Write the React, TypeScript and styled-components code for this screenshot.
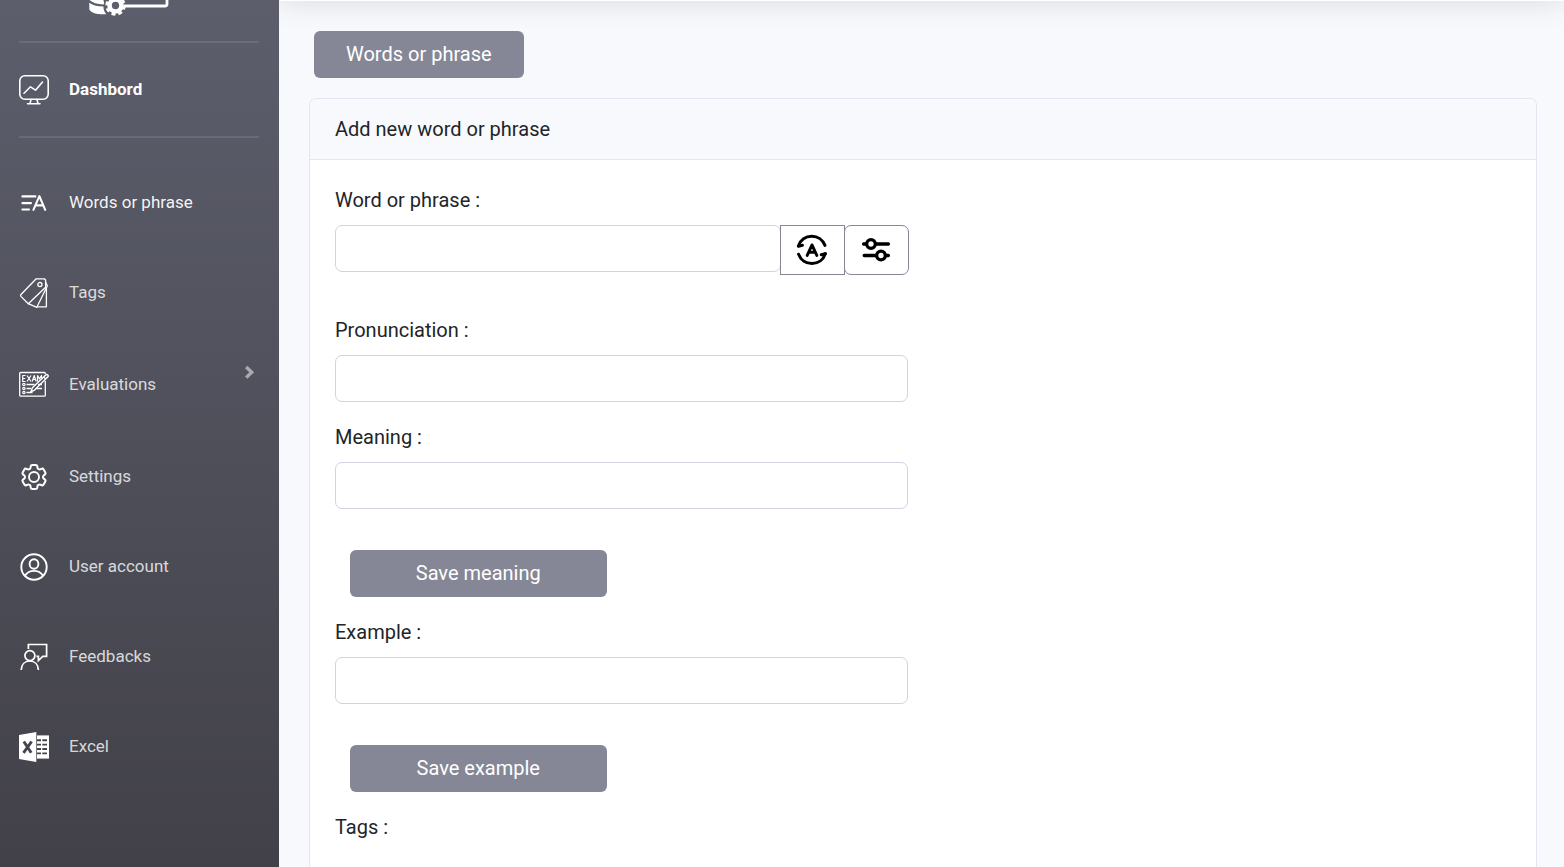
import React from "react";
import styled, { createGlobalStyle } from "styled-components";

const GlobalStyle = createGlobalStyle`
  *, *::before, *::after { box-sizing: border-box; }
  body {
    margin: 0;
    font-family: Roboto, "Liberation Sans", sans-serif;
    font-size: 20px;
    line-height: 30px;
    color: #212529;
    background: #f8f9fc;
  }
  button, input { font: inherit; }
`;

const Page = styled.div`
  display: flex;
  min-height: 100vh;
`;

const Sidebar = styled.nav`
  position: relative;
  z-index: 1;
  flex: 0 0 279px;
  display: flex;
  flex-direction: column;
  background: linear-gradient(180deg, #5c5e6b 0%, #5a5c69 8%, #424149 100%);
`;

const Brand = styled.a`
  display: flex;
  height: 41px;
  padding-left: 88px;
`;

const Divider = styled.hr`
  width: 240px;
  height: 2px;
  margin: 0 0 0 19px;
  border: 0;
  background: rgba(255, 255, 255, 0.1);
`;

const NavList = styled.ul`
  list-style: none;
  margin: 0;
  padding: 20px 0 0;
`;

const NavLink = styled.a<{ $active?: boolean; $strong?: boolean; $height?: number }>`
  display: flex;
  align-items: center;
  gap: 20px;
  height: ${(p) => p.$height ?? 90}px;
  padding: 0 24px 0 19px;
  color: ${(p) => (p.$strong ? "#fff" : p.$active ? "rgba(255,255,255,.95)" : "rgba(255,255,255,.8)")};
  font-size: 17px;
  font-weight: ${(p) => (p.$strong ? 700 : 400)};
  line-height: 28px;
  text-decoration: none;
`;

const NavText = styled.span`
  flex: 1;
  padding-bottom: 2px;
`;

const NavIcon = styled.svg`
  flex: 0 0 30px;
  width: 30px;
  height: 30px;
  fill: none;
  stroke: #fff;
`;

const Chevron = styled.svg`
  width: 11px;
  height: 14px;
  align-self: flex-start;
  margin-top: 27px;
`;

const Main = styled.main`
  flex: 1;
  min-width: 0;
  display: flex;
  flex-direction: column;
`;

const Topbar = styled.header`
  flex: 0 0 70px;
  margin-top: -69px;
  background: #fff;
  box-shadow: 0 2px 28px 0 rgba(58, 59, 69, 0.15);
`;

const Content = styled.div`
  flex: 1;
  display: flex;
  flex-direction: column;
  gap: 20px;
  padding: 30px 27px 0 30px;
`;

const Button = styled.button`
  height: 47px;
  padding: 0 32px 2px;
  border: 0;
  border-radius: 6px;
  color: #fff;
  background: #858796;
  line-height: 30px;
`;

const PageButton = styled(Button)`
  align-self: flex-start;
  margin-left: 5px;
`;

const SaveButton = styled(Button)`
  display: block;
  width: calc(50% - 30px);
  margin: 41px 0 20px 15px;
`;

const Card = styled.section`
  flex: 1;
  border: 1px solid #e3e6f0;
  border-bottom: 0;
  border-radius: 7px 7px 0 0;
  background: #fff;
`;

const CardTitle = styled.h1`
  margin: 0;
  padding: 15px 25px;
  border-bottom: 1px solid #e3e6f0;
  border-radius: 6px 6px 0 0;
  background: #f8f9fc;
  font-size: 20px;
  font-weight: 400;
`;

const Form = styled.form`
  width: 50%;
  padding: 25px 15px 0 25px;
`;

const Field = styled.div<{ $gap?: number }>`
  margin-bottom: ${(p) => p.$gap ?? 0}px;
`;

const Label = styled.label`
  display: block;
  margin-bottom: 10px;
`;

const GroupTitle = styled.div`
  margin-bottom: 10px;
`;

const TextInput = styled.input`
  display: block;
  width: 100%;
  height: 47px;
  padding: 0 15px;
  border: 1px solid #d1d3e2;
  border-radius: 7px;
  background: #fff;
  color: #6e707e;
`;

const InputGroup = styled.div`
  display: flex;
  align-items: flex-start;
  margin-right: -1px;

  ${TextInput} {
    flex: 1;
    min-width: 0;
  }
`;

const IconButton = styled.button<{ $last?: boolean }>`
  display: flex;
  align-items: center;
  justify-content: center;
  width: 65px;
  height: 50px;
  margin-left: -1px;
  padding: 0 1px 0 0;
  border: 1px solid #858796;
  border-radius: ${(p) => (p.$last ? "7px" : "0")};
  background: #fff;
`;

const MonitorIcon = () => (
  <NavIcon viewBox="0 0 30 30" strokeWidth="1.6" strokeLinecap="round" strokeLinejoin="round">
    <rect x="0.8" y="0.8" width="28.4" height="23.4" rx="5" />
    <path d="M5 18.2 11.5 11.8l5 3.4L23.5 7" />
    <path d="M12 24.5l-1 4M18 24.5l1 4M8.5 28.8h12.5" />
  </NavIcon>
);

const WordsIcon = () => (
  <NavIcon viewBox="0 0 30 30" strokeWidth="2.1" strokeLinecap="round" strokeLinejoin="round">
    <path d="M3.4 8.4h13M3.4 15.1h8.6M3.4 21.5h6.6" />
    <path d="M14.4 21.8 20.4 8.1l5.8 13.7M16.6 17.4h7.600" />
  </NavIcon>
);

const TagsIcon = () => (
  <NavIcon viewBox="0 0 30 30" strokeWidth="1.3" strokeLinejoin="round">
    <path d="M17.2 .8h8.2l1.2 1.2v7.2L9.3 25.7 1.9 18.4Q1.2 17.4 2 16.5z" />
    <path d="M26.600 4.400l1.800 3.400L17.800 29.300 9.300 25.700" />
    <path d="M27.400 9.500v19.300h-9.300" />
    <circle cx="20.900" cy="6.600" r="2.100" />
  </NavIcon>
);

const ExamIcon = () => (
  <NavIcon viewBox="0 0 30 30" strokeWidth="1.2" strokeLinejoin="round">
    <path d="M26.3 4V3.800Q26.300 2.500 25.400 2.500H1.600Q.7 2.500 .7 3.400v21.800q0 .9.900.9h23.800q.9 0 .9-.9V11" strokeWidth="1.300" />
    <path d="M6.500 5.500H3.700v6h2.800M3.700 8.500h2.500M8 5.500l4 6M12 5.500l-4 6M13.200 11.500l2-6 2 6M14 9.500h2.700M18.500 11.500v-6l2 3.400 2-3.400v3" />
    <path d="M11.900 21.800l1.500-4L26.700 5q1-1 2 0t.2 1.800L15.600 20.100zM24.700 7l2.100 2" strokeWidth="1.400" />
    <circle cx="4.900" cy="14.500" r="1.200" />
    <circle cx="4.900" cy="18.500" r="1.200" />
    <circle cx="4.900" cy="22.500" r="1.200" />
    <path d="M7.500 14.500h8M7.500 18.500h4.600M7.500 22.500h6M17 18.500h6M19 14.500h4" strokeWidth="1.300" />
  </NavIcon>
);

const GearIcon = () => (
  <NavIcon viewBox="0 0 24 24" strokeWidth="1.500" strokeLinecap="round" strokeLinejoin="round">
    <path d="M9.594 3.940c.09-.542.56-.94 1.110-.94h2.593c.55 0 1.020.398 1.110.94l.213 1.281c.063.374.313.686.645.87.074.04.147.083.22.127.325.196.72.257 1.075.124l1.217-.456a1.125 1.125 0 0 1 1.370.49l1.296 2.247a1.125 1.125 0 0 1-.26 1.431l-1.003.827c-.293.241-.438.613-.43.992a7.723 7.723 0 0 1 0 .255c-.008.378.137.75.43.991l1.004.827c.424.35.534.955.26 1.430l-1.298 2.247a1.125 1.125 0 0 1-1.369.491l-1.217-.456c-.355-.133-.75-.072-1.076.124a6.470 6.470 0 0 1-.22.128c-.331.183-.581.495-.644.869l-.213 1.281c-.09.543-.56.94-1.110.94h-2.594c-.55 0-1.019-.398-1.110-.94l-.213-1.281c-.062-.374-.312-.686-.644-.87a6.520 6.520 0 0 1-.22-.127c-.325-.196-.72-.257-1.076-.124l-1.217.456a1.125 1.125 0 0 1-1.369-.49l-1.297-2.247a1.125 1.125 0 0 1 .26-1.431l1.004-.827c.292-.24.437-.613.43-.991a6.932 6.932 0 0 1 0-.255c.007-.38-.138-.751-.43-.992l-1.004-.827a1.125 1.125 0 0 1-.26-1.430l1.297-2.247a1.125 1.125 0 0 1 1.370-.491l1.216.456c.356.133.751.072 1.076-.124.072-.044.146-.086.22-.128.332-.183.582-.495.644-.869z" transform="translate(-0.900 -0.900) scale(1.075)" />
    <circle cx="12" cy="12" r="4" />
  </NavIcon>
);

const UserIcon = () => (
  <NavIcon viewBox="0 0 30 30" strokeWidth="1.900">
    <circle cx="15" cy="15" r="12.700" />
    <ellipse cx="15" cy="12" rx="4.400" ry="4.800" />
    <path d="M5.900 23.800c2.200-3.300 5.300-4.900 9.100-4.900s6.900 1.600 9.100 4.900" />
  </NavIcon>
);

const FeedbackIcon = () => (
  <NavIcon viewBox="0 0 30 30" strokeWidth="1.700">
    <path d="M9.400 7V2.500h18.200v11.800h-3.800l-4.400 4.200v-4.200h-2" />
    <circle cx="10.900" cy="13.600" r="5" />
    <path d="M2.200 28c.2-5.400 3.500-9 8.600-9s8.400 3.600 8.600 9" />
  </NavIcon>
);

const ExcelIcon = () => (
  <NavIcon viewBox="0 0 30 30">
    <path d="M17.300 0v30L0 27V3z" fill="#fff" stroke="none" />
    <path d="M18 3.400h12v23.200H18z" fill="#fff" stroke="none" />
    <path d="M18 8.200h4M23.300 8.200h4.700M18 12.600h4M23.300 12.600h4.700M18 17h4M23.300 17h4.700M18 21.400h4M23.300 21.400h4.700" stroke="#45454e" strokeWidth="1.900" />
    <path d="M4.800 9.500 12.200 20.800M12.600 9.500 4.500 20.800" stroke="#45454e" strokeWidth="2.900" />
  </NavIcon>
);

const BrandMark = () => (
  <svg width="82" height="17" viewBox="0 0 82 17" fill="none" aria-hidden="true">
    <path d="M1.400 0h14l.8 3.200-.7 1.200C9 4.200 4.700 2.800 1.400 0zM1.200 2.800c4 2.800 8.600 3.800 14.200 3.800 0 2.600.8 5.400 2.800 7.600C10 14.600 3.600 13.400 1.400 9.800z" fill="#fff" />
    <circle cx="27.500" cy="5.500" r="6" stroke="#fff" strokeWidth="4.600" />
    <circle cx="27.500" cy="5.500" r="9" stroke="#fff" strokeWidth="2.400" strokeDasharray="4 3.070" />
    <path d="M36 6h41q2 0 2-2V0" stroke="#fff" strokeWidth="2.800" />
  </svg>
);

const TranslateIcon = () => (
  <svg width="32" height="32" viewBox="0 0 32 32" fill="none" stroke="#000" strokeWidth="3" strokeLinecap="round" strokeLinejoin="round" aria-hidden="true">
    <path d="M2.500 11.800C4.500 6 9.600 2.200 15.700 2.200c6 0 11.200 3.600 13.300 9.200" />
    <path d="M29.300 19.800C27.400 25.700 22.200 29.600 16 29.600S4.600 25.800 2.600 20.200" />
    <path d="M2.400 12.200l4-.9M29.300 19.600l-4 1.200" />
    <path d="M11.200 21.400 16 10.900l4.800 10.500M13.200 18.200h5.600" strokeWidth="2.900" />
  </svg>
);

const SlidersIcon = () => (
  <svg width="30" height="26" viewBox="0 0 30 26" fill="none" stroke="#000" strokeWidth="3.300" strokeLinecap="round" aria-hidden="true">
    <path d="M2.600 7h2.500M14.600 7h12.800M3.200 18.500h12M24.800 18.500h2.600" />
    <circle cx="10" cy="7" r="4.300" />
    <circle cx="20" cy="18.500" r="4.300" />
  </svg>
);

type Item = { label: string; icon: React.FC; active?: boolean; nested?: boolean };

const items: Item[] = [
  { label: "Words or phrase", icon: WordsIcon, active: true },
  { label: "Tags", icon: TagsIcon },
  { label: "Evaluations", icon: ExamIcon, nested: true },
  { label: "Settings", icon: GearIcon },
  { label: "User account", icon: UserIcon },
  { label: "Feedbacks", icon: FeedbackIcon },
  { label: "Excel", icon: ExcelIcon },
];

export default function App() {
  return (
    <>
      <GlobalStyle />
      <Page>
        <Sidebar>
          <Brand href="#" aria-label="Home">
            <BrandMark />
          </Brand>
          <Divider />
          <NavLink href="#" $strong $height={93}>
            <MonitorIcon />
            <NavText>Dashbord</NavText>
          </NavLink>
          <Divider />
          <NavList>
            {items.map(({ label, icon: Icon, active, nested }) => (
              <li key={label}>
                <NavLink href="#" $active={active} $height={nested ? 94 : 90}>
                  <Icon />
                  <NavText>{label}</NavText>
                  {nested && (
                    <Chevron viewBox="0 0 11 14" fill="none" stroke="#a9a9af" strokeWidth="3.400" aria-hidden="true">
                      <path d="M2.200 2 7.700 7.300 2.200 12.600" />
                    </Chevron>
                  )}
                </NavLink>
              </li>
            ))}
          </NavList>
        </Sidebar>
        <Main>
          <Topbar />
          <Content>
            <PageButton type="button">Words or phrase</PageButton>
            <Card>
              <CardTitle>Add new word or phrase</CardTitle>
              <Form>
                <Field $gap={40}>
                  <Label htmlFor="word">Word or phrase :</Label>
                  <InputGroup>
                    <TextInput id="word" type="text" />
                    <IconButton type="button" aria-label="Translate">
                      <TranslateIcon />
                    </IconButton>
                    <IconButton type="button" aria-label="Options" $last>
                      <SlidersIcon />
                    </IconButton>
                  </InputGroup>
                </Field>
                <Field $gap={20}>
                  <Label htmlFor="pronunciation">Pronunciation :</Label>
                  <TextInput id="pronunciation" type="text" />
                </Field>
                <Field>
                  <Label htmlFor="meaning">Meaning :</Label>
                  <TextInput id="meaning" type="text" />
                </Field>
                <SaveButton type="button">Save meaning</SaveButton>
                <Field>
                  <Label htmlFor="example">Example :</Label>
                  <TextInput id="example" type="text" />
                </Field>
                <SaveButton type="button">Save example</SaveButton>
                <GroupTitle>Tags :</GroupTitle>
              </Form>
            </Card>
          </Content>
        </Main>
      </Page>
    </>
  );
}
